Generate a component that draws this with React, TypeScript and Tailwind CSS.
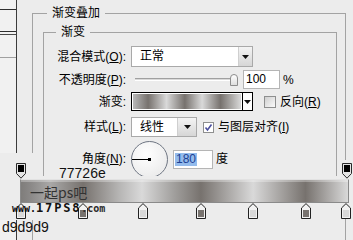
import React from "react";

const bottomStops = [
  { x: 21, c: "#d9d9d9" },
  { x: 83, c: "#77726e" },
  { x: 143, c: "#d9d9d9" },
  { x: 201, c: "#77726e" },
  { x: 253, c: "#d9d9d9" },
  { x: 306, c: "#77726e" },
  { x: 346, c: "#d9d9d9" },
];
const topStops = [21, 347];

const Arrow = () => (
  <svg width="7" height="4" viewBox="0 0 7 4">
    <path d="M0 0H7L3.5 4Z" fill="#111" />
  </svg>
);

const TopStop = ({ x }: { x: number }) => (
  <svg className="absolute top-[163px]" style={{ left: x - 5 }} width="10" height="16" viewBox="0 0 10 16">
    <path d="M0.5 0.5H9.5V10.5L5 15.2L0.5 10.5Z" fill="#e4e4e4" stroke="#2a2a2a" />
    <rect x="2" y="2" width="6" height="7" fill="#000" />
  </svg>
);

const BottomStop = ({ x, c }: { x: number; c: string }) => (
  <svg className="absolute top-[203px]" style={{ left: x - 5 }} width="10" height="16" viewBox="0 0 10 16">
    <path d="M5 0.6L9.5 5V15.5H0.5V5Z" fill="#f2f2f2" stroke="#222" />
    <rect x="2" y="7" width="6" height="7" fill={c} />
  </svg>
);

export default function App() {
  return (
    <div className="relative w-[353px] h-[240px] overflow-hidden bg-[#ececec] flex items-start text-[12px] text-black font-['Liberation_Sans','Noto_Sans_CJK_SC',sans-serif]">
      {/* left list panel */}
      <div className="w-[17px] h-full shrink-0 border-r border-[#3c3c3c] bg-[#f1f1f1] flex flex-col">
        <div className="h-[9px]" />
        <div className="h-[22px] border-t border-[#2e2e2e]" />
        <div className="h-[3px] border-t border-[#2e2e2e]" />
        <div className="h-[23px] border-t border-[#4a4a4a]" />
        <div className="border-t border-[#a0a0a0]" />
      </div>

      {/* outer group */}
      <fieldset className="ml-[15px] mt-[5px] w-[314px] h-[300px] shrink-0 min-w-0 border border-[#a3a3a3]">
        <legend className="ml-[14px] px-[5px] leading-[16px]">渐变叠加</legend>

        <fieldset className="ml-[10px] mt-[3px] w-[294px] min-w-0 border border-[#a3a3a3] pt-[6px] pb-[40px]">
          <legend className="ml-[12px] px-[5px] leading-[16px]">渐变</legend>

          {/* row 1 */}
          <div className="flex items-center h-[21px]">
            <div className="w-[82px] shrink-0 text-right">
              混合模式(<u>O</u>):
            </div>
            <div className="ml-[5px] flex h-[21px] w-[122px] border border-[#a9a9a9] bg-white">
              <span className="flex-1 pl-[8px] leading-[19px]">正常</span>
              <span className="w-[14px] border-l border-[#cfcfcf] bg-[linear-gradient(#f4f4f4,#d6d6d6)] flex items-center justify-center">
                <Arrow />
              </span>
            </div>
          </div>

          {/* row 2 */}
          <div className="flex items-center h-[19px] mt-[3px]">
            <div className="w-[82px] shrink-0 text-right">
              不透明度(<u>P</u>):
            </div>
            <div className="ml-[5px] flex items-center">
              <div className="w-[4px]" />
              <div className="w-[99px] h-[3px] border-t border-[#a0a0a0] border-b border-b-white bg-[#d9d9d9]" />
              <div className="-ml-[4px] w-[8px] h-[12px] rounded-t-[4px] border border-[#8d8d8d] bg-[linear-gradient(#ffffff,#dedede)]" />
              <div className="ml-[5px] w-[37px] h-[19px] border border-[#b5b5b5] bg-white pl-[2px] leading-[17px]">100</div>
              <span className="ml-[3px]">%</span>
            </div>
          </div>

          {/* row 3 */}
          <div className="flex items-center h-[19px] mt-[3px]">
            <div className="w-[82px] shrink-0 text-right">渐变:</div>
            <div className="ml-[5px] flex h-[19px] border border-black bg-white">
              <div className="w-[111px] border-r border-black p-[1px]">
                <div className="h-full bg-[linear-gradient(to_right,#b8b8b8_0%,#77726e_14%,#d9d9d9_31%,#77726e_48%,#d9d9d9_64%,#77726e_81%,#d9d9d9_100%)]" />
              </div>
              <div className="w-[9px] flex items-center justify-center">
                <Arrow />
              </div>
            </div>
            <div className="ml-[11px] w-[12px] h-[12px] border border-[#8e8f8f] bg-[linear-gradient(135deg,#cfcfcf,#fbfbfb)]" />
            <span className="ml-[4px]">
              反向(<u>R</u>)
            </span>
          </div>

          {/* row 4 */}
          <div className="flex items-center h-[20px] mt-[6px]">
            <div className="w-[82px] shrink-0 text-right">
              样式(<u>L</u>):
            </div>
            <div className="ml-[5px] flex h-[20px] w-[66px] border border-[#a9a9a9] bg-white">
              <span className="flex-1 pl-[8px] leading-[18px]">线性</span>
              <span className="w-[19px] border-l border-[#cfcfcf] bg-[linear-gradient(#f4f4f4,#d6d6d6)] flex items-center justify-center">
                <Arrow />
              </span>
            </div>
            <div className="ml-[6px] w-[11px] h-[11px] border border-[#8e8f8f] bg-white flex items-center justify-center">
              <svg width="9" height="9" viewBox="0 0 9 9">
                <path d="M1.5 4.5L3.5 7L7.5 1.5" fill="none" stroke="#4b4f9e" strokeWidth="1.6" />
              </svg>
            </div>
            <span className="ml-[4px]">
              与图层对齐(<u>I</u>)
            </span>
          </div>

          {/* row 5 */}
          <div className="flex items-center h-[38px] mt-[3px]">
            <div className="w-[82px] shrink-0 text-right">
              角度(<u>N</u>):
            </div>
            <div className="ml-[5px] w-[37px] h-[37px] rounded-full border-[1.5px] border-[#6f7683] bg-[radial-gradient(circle_at_40%_35%,#ffffff,#e6e6e6)] flex items-center">
              <div className="w-[17px] h-[1px] bg-black" />
              <div className="-ml-[1px] w-[3px] h-[3px] bg-black" />
            </div>
            <div className="ml-[5px] w-[40px] h-[19px] border border-[#b5b5b5] bg-white flex items-center pl-[1px]">
              <span className="bg-[#93bbec] text-[#1c3f92] leading-[13px] px-[1px]">180</span>
            </div>
            <span className="ml-[3px]">度</span>
          </div>
        </fieldset>
      </fieldset>

      {/* gradient editor overlay */}
      <div className="absolute left-0 top-[153px] w-[40px] h-[67px] bg-[#ececec]" />
      <div className="absolute left-[40px] top-[176px] w-[300px] h-[64px] bg-[#ececec]" />
      <div className="absolute left-[340px] top-[160px] w-[13px] h-[58px] bg-[#ececec]" />

      {topStops.map((x) => (
        <TopStop key={x} x={x} />
      ))}

      <div className="absolute left-[59px] top-[166px] text-[14px] leading-[14px] font-['Liberation_Sans',sans-serif] text-[#111]">77726e</div>

      <div className="absolute left-[20px] top-[179px] w-[329px] h-[24px] border border-[#8a8a8a] border-t-[#e2e2e2] bg-[linear-gradient(to_right,#7f7d7b_0%,#8b8988_3%,#a9a8a7_9%,#77726e_19%,#b6b5b4_30%,#d9d9d9_37%,#a09e9c_47%,#77726e_55%,#d9d9d9_71%,#77726e_87%,#d9d9d9_100%)] shadow-[inset_0_2px_0_rgba(255,255,255,0.3)]" />

      <div className="absolute left-[30px] top-[185px] text-[14px] leading-[14px] text-[#333] font-['Noto_Sans_CJK_SC',sans-serif]">一起ps吧</div>

      {bottomStops.map((s) => (
        <BottomStop key={s.x} x={s.x} c={s.c} />
      ))}

      <div className="absolute left-[12px] top-[202px] flex items-end leading-none font-['DejaVu_Sans_Mono',monospace] font-bold text-[#111]">
        <span className="text-[10px]">www.</span>
        <span className="text-[12px] tracking-[1.8px]">17PS8</span>
        <span className="text-[10px] text-[#2a2a2a]">.com</span>
      </div>

      <div className="absolute left-[2px] top-[220px] text-[14px] leading-[14px] font-['Liberation_Sans',sans-serif] text-[#111]">d9d9d9</div>
    </div>
  );
}
